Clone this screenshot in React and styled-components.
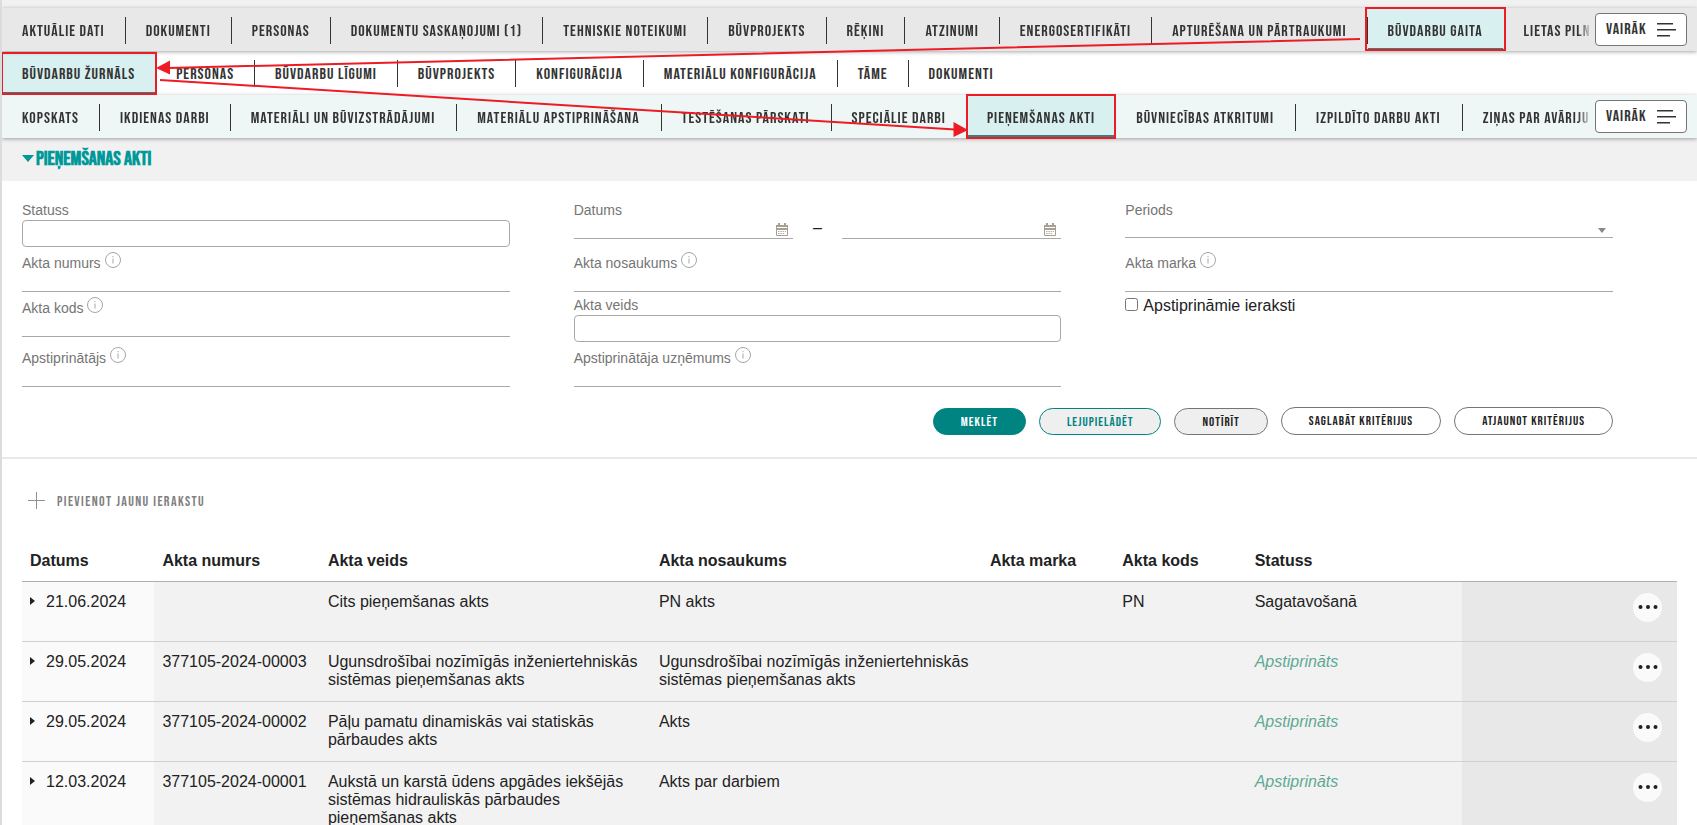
import React from "react";
import styled, { createGlobalStyle, css } from "styled-components";

const Global = createGlobalStyle`
  *, *::before, *::after { box-sizing: border-box; }
  body { margin: 0; background: #fff; color: #222; font: 16px/18px "Liberation Sans", Arial, sans-serif; }
  button, input, select { font: inherit; color: inherit; }
`;

const display = css`
  font-family: "Bebas Neue", "Roboto Condensed", sans-serif;
  letter-spacing: 1px;
  text-transform: uppercase;
`;

const Page = styled.div`
  position: relative;
  height: 100vh;
  overflow: hidden;
  border-left: 2px solid #dcdcdc;
`;

const Header = styled.header`
  padding-top: 8px;
  background: #f1f1f1;
`;

const NavBar = styled.nav`
  position: relative;
  z-index: ${(p) => p.$layer};
  display: flex;
  align-items: center;
  height: ${(p) => (p.$tall ? 44 : 43)}px;
  padding-right: 10px;
  background: ${(p) => p.$tone};
  box-shadow: 0 1px 4px rgba(0, 0, 0, 0.35);
`;

const Tabs = styled.div`
  display: flex;
  flex: 1;
  min-width: 0;
  height: 100%;
  margin-right: 3px;
  overflow: hidden;
  ${(p) => p.$fade && "mask-image: linear-gradient(to left, transparent 0, #000 14px);"}
`;

const Tab = styled.a`
  ${display}
  position: relative;
  flex: none;
  display: flex;
  align-items: center;
  padding: 4px ${(p) => (p.$roomy ? 21 : 20)}px 0 20px;
  border-right: 1px solid transparent;
  font-size: 16px;
  line-height: 20px;
  color: #333;
  text-decoration: none;
  white-space: nowrap;
  ${(p) =>
    p.$active
      ? "background: #d8f0ef; border-bottom: 3px solid #33827f; padding-top: 7px;"
      : `&:not(:last-child)::after {
          content: "";
          position: absolute;
          right: -1px;
          top: 9px;
          height: 27px;
          width: 1px;
          background: #333;
        }`}
`;

const MoreButton = styled.button`
  ${display}
  display: flex;
  align-items: center;
  justify-content: space-between;
  flex: none;
  width: 92px;
  height: 33px;
  padding: 0 10px;
  border: 1px solid #757575;
  border-radius: 4px;
  background: #fff;
  font-size: 16px;
  color: #333;
`;

const TitleBar = styled.div`
  display: flex;
  align-items: center;
  height: 43px;
  padding: 0 20px 2px;
  background: #f1f1f1;
`;

const Title = styled.h1`
  margin: 0;
  font: bold 20px/24px "Bebas Neue", "Roboto Condensed", sans-serif;
`;

const TitleToggle = styled.button`
  display: flex;
  align-items: center;
  gap: 2px;
  padding: 0;
  border: 0;
  background: none;
  color: #009999;
  text-transform: uppercase;
`;

const SearchForm = styled.form`
  padding: 19px 84px 22px 20px;
  border-bottom: 2px solid #e9e9e9;
`;

const Fields = styled.div`
  display: grid;
  grid-template-columns: repeat(3, minmax(0, 1fr));
  gap: 3px 64px;
`;

const Field = styled.div`
  grid-column: ${(p) => p.$col};
  padding-top: ${(p) => (p.$hint ? 0 : 2)}px;
`;

const Label = styled.label`
  display: block;
  font-size: 14px;
  line-height: 16px;
  height: 18px;
  color: #757575;
`;

const HintLabel = styled.div`
  display: flex;
  gap: 4px;
  height: 21px;
  padding-top: 2px;

  label {
    padding-top: 3px;
  }
`;

const HintIcon = styled.svg`
  flex: none;
  width: 16px;
  height: 16px;
`;

const BoxInput = styled.input`
  display: block;
  width: 100%;
  height: 27px;
  border: 1px solid #a9a9a9;
  border-radius: 4px;
  background: #fff;
`;

const LineInput = styled.input`
  display: block;
  width: 100%;
  height: 21px;
  padding: 0;
  border: 0;
  border-bottom: 1px solid #a9a9a9;
  background: none;
`;

const DateRange = styled.div`
  display: grid;
  grid-template-columns: minmax(0, 1fr) 49px minmax(0, 1fr);
  text-align: center;
  line-height: 16px;
`;

const DateBox = styled.div`
  display: flex;
  align-items: center;
  border-bottom: 1px solid #a9a9a9;
  height: 19px;
  padding-right: 5px;

  input {
    flex: 1;
    min-width: 0;
    height: 16px;
    padding: 0;
    border: 0;
    background: none;
  }
  button {
    display: flex;
    padding: 0;
    border: 0;
    background: none;
  }
`;

const SelectBox = styled.div`
  display: flex;
  align-items: center;
  height: 18px;
  border-bottom: 1px solid #a9a9a9;

  select {
    flex: 1;
    height: 16px;
    appearance: none;
    border: 0;
    background: none;
  }
  svg {
    margin: 4px 7px 0 -15px;
    pointer-events: none;
  }
`;

const CheckField = styled.label`
  display: flex;
  align-items: flex-start;
  gap: 5px;
  grid-column: 3;
  padding-top: 2px;

  input {
    width: 13px;
    height: 13px;
    margin: 1px 0 0;
  }
`;

const Actions = styled.div`
  display: flex;
  justify-content: flex-end;
  align-items: flex-end;
  gap: 13px;
  margin-top: 20px;
`;

const tones = {
  primary: "background: #008482; border-color: #008482; color: #fff; height: 27px;",
  accent: "background: #efefef; border-color: #008482; color: #008482; height: 27px;",
  muted: "background: #efefef; height: 27px;",
  plain: "background: #fff; height: 28px;",
};

const Pill = styled.button`
  ${display}
  padding: 0 27px;
  border: 1px solid #757575;
  border-radius: 14px;
  font-size: 13px;
  line-height: 20px;
  color: #222;
  ${(p) => tones[p.$tone]}
`;

const Results = styled.section`
  padding: 31px 20px 0;
`;

const AddButton = styled.button`
  ${display}
  display: flex;
  align-items: center;
  gap: 12px;
  height: 20px;
  margin-bottom: 31px;
  padding: 0 6px;
  border: 0;
  background: none;
  font-size: 14px;
  letter-spacing: 0.1em;
  color: #808080;

  span {
    padding-top: 3px;
  }
`;

const Table = styled.table`
  width: 100%;
  table-layout: fixed;
  border-collapse: collapse;
`;

const HeadCell = styled.th`
  width: ${(p) => p.$width};
  height: 40px;
  padding: 1px 8px 0;
  border-bottom: 1px solid #b0b0b0;
  text-align: left;
`;

const Cell = styled.td`
  height: 60px;
  padding: 11px 8px 8px;
  border-bottom: 1px solid #d0d0d0;
  background: ${(p) => p.$tone || "#f2f2f2"};
  vertical-align: top;
`;

const DateCell = styled.div`
  display: flex;
  gap: 10px;

  button {
    display: flex;
    width: 6px;
    height: 16px;
    align-items: center;
    padding: 0;
    border: 0;
    background: none;
  }
`;

const Status = styled.span`
  ${(p) => p.$approved && "color: #5fa994; font-style: italic;"}
`;

const RowMenu = styled.button`
  display: flex;
  align-items: center;
  justify-content: center;
  width: 29px;
  height: 29px;
  margin: 0 7px 0 auto;
  padding: 0;
  border: 0;
  border-radius: 50%;
  background: #fafafa;
`;

const Annotations = styled.svg`
  position: absolute;
  z-index: 10;
  left: -2px;
  top: 0;
  width: 1697px;
  height: 150px;
  pointer-events: none;
`;

const projectTabs = ["Aktuālie dati", "Dokumenti", "Personas", "Dokumentu saskaņojumi (1)", "Tehniskie noteikumi", "Būvprojekts", "Rēķini", "Atzinumi", "Energosertifikāti", "Apturēšana un pārtraukumi", "Būvdarbu gaita", "Lietas piln"];
const worksTabs = ["Būvdarbu žurnāls", "Personas", "Būvdarbu līgumi", "Būvprojekts", "Konfigurācija", "Materiālu konfigurācija", "Tāme", "Dokumenti"];
const journalTabs = ["Kopskats", "Ikdienas darbi", "Materiāli un būvizstrādājumi", "Materiālu apstiprināšana", "Testēšanas pārskati", "Speciālie darbi", "Pieņemšanas akti", "Būvniecības atkritumi", "Izpildīto darbu akti", "Ziņas par avāriju"];

const columns = [
  ["Datums", "8%"],
  ["Akta numurs", "10%"],
  ["Akta veids", "20%"],
  ["Akta nosaukums", "20%"],
  ["Akta marka", "8%"],
  ["Akta kods", "8%"],
  ["Statuss", "13%"],
  ["", "13%"],
];

const rows = [
  ["21.06.2024", "", "Cits pieņemšanas akts", "PN akts", "", "PN", "Sagatavošanā"],
  ["29.05.2024", "377105-2024-00003", "Ugunsdrošībai nozīmīgās inženiertehniskās sistēmas pieņemšanas akts", "Ugunsdrošībai nozīmīgās inženiertehniskās sistēmas pieņemšanas akts", "", "", "Apstiprināts"],
  ["29.05.2024", "377105-2024-00002", "Pāļu pamatu dinamiskās vai statiskās pārbaudes akts", "Akts", "", "", "Apstiprināts"],
  ["12.03.2024", "377105-2024-00001", "Aukstā un karstā ūdens apgādes iekšējās sistēmas hidrauliskās pārbaudes pieņemšanas akts", "Akts par darbiem", "", "", "Apstiprināts"],
];

function TabBar({ items, active, tone, layer, more, tall, roomy }) {
  return (
    <NavBar $tone={tone} $layer={layer} $tall={tall}>
      <Tabs $fade={more}>
        {items.map((t) => (
          <Tab key={t} href="#" $active={t === active} $roomy={roomy && t.length > 18}>
            {t}
          </Tab>
        ))}
      </Tabs>
      {more && (
        <MoreButton type="button">
          Vairāk
          <svg width="19" height="14" viewBox="0 0 19 14" stroke="#333" strokeWidth="1.4" aria-hidden="true">
            <path d="M0 .7h16M0 6.700h19M0 12.700h13" />
          </svg>
        </MoreButton>
      )}
    </NavBar>
  );
}

function HintField({ id, label, col }) {
  return (
    <Field $col={col} $hint>
      <HintLabel>
        <Label htmlFor={id}>{label}</Label>
        <HintIcon viewBox="0 0 16 16" fill="none" stroke="#a6a6a6" aria-hidden="true">
          <circle cx="8" cy="8" r="7.5" />
          <path d="M8 6.500v5M8 4v1.200" />
        </HintIcon>
      </HintLabel>
      <LineInput id={id} />
    </Field>
  );
}

function BoxField({ id, label, col }) {
  return (
    <Field $col={col}>
      <Label htmlFor={id}>{label}</Label>
      <BoxInput id={id} />
    </Field>
  );
}

function DateInput({ id, label }) {
  return (
    <DateBox>
      <input id={id} aria-label={label} />
      <button type="button" aria-label="Kalendārs">
        <svg width="12" height="13" viewBox="0 0 12 13" aria-hidden="true">
          <path d="M2 0h2v3H2zM8 0h2v3H8z" fill="#a89f94" />
          <path d="M.5 2.500h11v10H.5z" fill="#fff" stroke="#a89f94" />
          <path d="M0 2h12v2H0zM0 5h12v2H0z" fill="#a89f94" />
          <path d="M2 8.500h8M2 10.500h7" stroke="#b9b1a8" strokeDasharray="1.5 .8" />
        </svg>
      </button>
    </DateBox>
  );
}

export default function App() {
  return (
    <Page>
      <Global />
      <Header>
        <TabBar items={projectTabs} active="Būvdarbu gaita" tone="#e8e8e8" layer={1} more />
        <TabBar items={worksTabs} active="Būvdarbu žurnāls" tone="#fff" layer={0} tall />
        <TabBar items={journalTabs} active="Pieņemšanas akti" tone="#eef7f6" layer={1} more roomy />
      </Header>

      <TitleBar>
        <Title>
          <TitleToggle type="button">
            <svg width="12" height="7" viewBox="0 0 12 7" fill="#009999" aria-hidden="true">
              <path d="M0 0h12L6 7z" />
            </svg>
            Pieņemšanas akti
          </TitleToggle>
        </Title>
      </TitleBar>

      <SearchForm onSubmit={(e) => e.preventDefault()}>
        <Fields>
          <BoxField id="status" label="Statuss" col={1} />
          <Field $col={2}>
            <Label htmlFor="date-from">Datums</Label>
            <DateRange>
              <DateInput id="date-from" label="Datums no" />
              <span>–</span>
              <DateInput id="date-to" label="Datums līdz" />
            </DateRange>
          </Field>
          <Field $col={3}>
            <Label htmlFor="period">Periods</Label>
            <SelectBox>
              <select id="period" />
              <svg width="8" height="5" viewBox="0 0 8 5" fill="#888" aria-hidden="true">
                <path d="M0 0h8L4 5z" />
              </svg>
            </SelectBox>
          </Field>

          <HintField id="number" label="Akta numurs" col={1} />
          <HintField id="name" label="Akta nosaukums" col={2} />
          <HintField id="mark" label="Akta marka" col={3} />

          <HintField id="code" label="Akta kods" col={1} />
          <BoxField id="type" label="Akta veids" col={2} />
          <CheckField>
            <input type="checkbox" />
            Apstiprināmie ieraksti
          </CheckField>

          <HintField id="approver" label="Apstiprinātājs" col={1} />
          <HintField id="company" label="Apstiprinātāja uzņēmums" col={2} />
        </Fields>

        <Actions>
          <Pill $tone="primary">Meklēt</Pill>
          <Pill type="button" $tone="accent">Lejupielādēt</Pill>
          <Pill type="button" $tone="muted">Notīrīt</Pill>
          <Pill type="button" $tone="plain">Saglabāt kritērijus</Pill>
          <Pill type="button" $tone="plain">Atjaunot kritērijus</Pill>
        </Actions>
      </SearchForm>

      <Results>
        <AddButton type="button">
          <svg width="17" height="17" viewBox="0 0 17 17" stroke="#909090" aria-hidden="true">
            <path d="M8.500 0v17M0 8.500h17" />
          </svg>
          <span>Pievienot jaunu ierakstu</span>
        </AddButton>

        <Table>
          <thead>
            <tr>
              {columns.map(([name, width], i) => (
                <HeadCell key={i} $width={width}>{name}</HeadCell>
              ))}
            </tr>
          </thead>
          <tbody>
            {rows.map(([date, ...cells], r) => (
              <tr key={r}>
                <Cell $tone="#fafafa">
                  <DateCell>
                    <button type="button" aria-label="Izvērst">
                      <svg width="5" height="8" viewBox="0 0 5 8" fill="#222" aria-hidden="true">
                        <path d="M0 0l5 4-5 4z" />
                      </svg>
                    </button>
                    {date}
                  </DateCell>
                </Cell>
                {cells.map((c, i) => (
                  <Cell key={i}>
                    {i === 5 ? <Status $approved={c === "Apstiprināts"}>{c}</Status> : c}
                  </Cell>
                ))}
                <Cell $tone="#e8e8e8">
                  <RowMenu type="button" aria-label="Darbības">
                    <svg width="20" height="4" viewBox="0 0 20 4" fill="#222" aria-hidden="true">
                      <circle cx="2.5" cy="2" r="2" />
                      <circle cx="10" cy="2" r="2" />
                      <circle cx="17.5" cy="2" r="2" />
                    </svg>
                  </RowMenu>
                </Cell>
              </tr>
            ))}
          </tbody>
        </Table>
      </Results>

      <Annotations viewBox="0 0 1697 150" fill="none" stroke="#ed1c24" strokeWidth="2" aria-hidden="true">
        <rect x="1366" y="8" width="139" height="42" />
        <rect x="2" y="53" width="154" height="41" />
        <rect x="967" y="95" width="148" height="43" />
        <path d="M1360 39L168 68M160 80L955 129.500" />
        <path d="M156 68l14-7.500v14z M968 130l-14.500-8v15z" fill="#ed1c24" stroke="none" />
      </Annotations>
    </Page>
  );
}
